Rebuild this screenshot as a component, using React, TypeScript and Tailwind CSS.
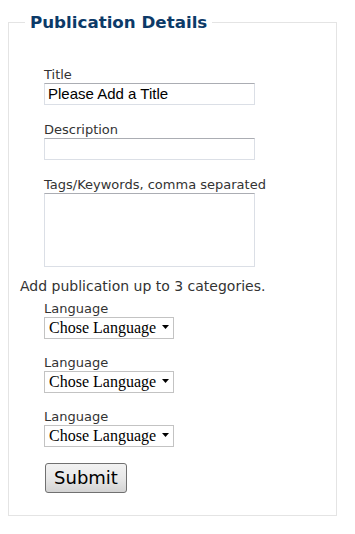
import React from 'react';

function LanguageSelect() {
  return (
    <div className="mt-4">
      <label className="block text-[13px] leading-[16px] text-[#333]">Language</label>
      <div className="relative w-[130px]">
        <select
          className="block w-[130px] h-[22px] appearance-none border border-[#c3c3c3] bg-white pl-[4px] text-[16px] leading-[20px] text-black"
          style={{ fontFamily: '"Liberation Serif", serif' }}
          defaultValue=""
        >
          <option value="">Chose Language</option>
          <option value="en">English</option>
          <option value="ar">Arabic</option>
        </select>
        <svg className="pointer-events-none absolute right-[5px] top-[8px]" width="7" height="4" viewBox="0 0 7 4">
          <path d="M0 0H7L3.5 4Z" fill="#000" />
        </svg>
      </div>
    </div>
  );
}

export default function App() {
  return (
    <div className="min-h-screen bg-white" style={{ fontFamily: '"DejaVu Sans", Verdana, sans-serif' }}>
      <fieldset className="ml-2 mt-[12px] w-[329px] border border-[#e4e4e4] pl-[11px] pr-[10px] pb-[22px]">
        <legend className="ml-[5px] px-[5px] text-[16.7px] leading-[20px] font-bold text-[#0c3a68]">
          Publication Details
        </legend>

        <div className="mt-[34px] pl-[24px]">
          <label className="block text-[13px] leading-[17px] text-[#333]">Title</label>
          <input
            type="text"
            defaultValue="Please Add a Title"
            className="block w-[211px] h-[22px] border border-[#dbdfe6] border-t-[#abadb3] px-[3px] text-[15px] text-black outline-none"
            style={{ fontFamily: '"Liberation Sans", Arial, sans-serif' }}
          />

          <label className="mt-4 block text-[13px] leading-[17px] text-[#333]">Description</label>
          <input
            type="text"
            className="block w-[211px] h-[22px] border border-[#dbdfe6] border-t-[#abadb3] px-[3px] text-[15px] outline-none"
          />

          <label className="mt-4 block text-[13px] leading-[17px] text-[#333]">Tags/Keywords, comma separated</label>
          <textarea className="block w-[211px] h-[74px] resize-none border border-[#dbdfe6] border-t-[#abadb3] outline-none" />
        </div>

        <p className="mt-[11px] text-[14px] leading-[17px] text-[#333]">Add publication up to 3 categories.</p>

        <div className="-mt-[10px] pl-[24px]">
          <LanguageSelect />
          <LanguageSelect />
          <LanguageSelect />

          <button
            type="button"
            className="mt-4 ml-px w-[82px] h-[30px] rounded-[3px] border border-[#707070] bg-gradient-to-b from-[#f2f2f2] via-[#e8e8e8] to-[#d3d3d3] text-[18px] leading-[22px] text-black"
          >
            Submit
          </button>
        </div>
      </fieldset>
    </div>
  );
}
